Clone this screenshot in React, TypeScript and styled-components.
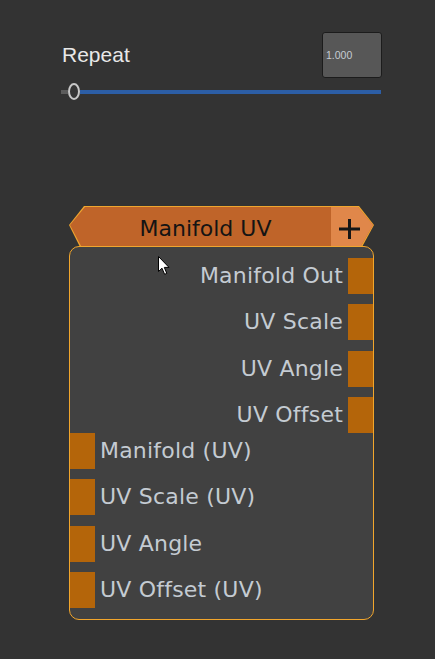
import React from "react";
import styled, { createGlobalStyle } from "styled-components";

const GlobalStyle = createGlobalStyle`
  html, body {
    margin: 0;
    padding: 0;
    background: #333333;
  }
  body {
    font-family: "DejaVu Sans", "Liberation Sans", sans-serif;
  }
`;

const Page = styled.div`
  position: relative;
  width: 435px;
  min-height: 659px;
  box-sizing: border-box;
  padding-top: 32px;
  background: #333333;
  overflow: hidden;
`;

const ParamBlock = styled.div`
  margin-left: 61px;
  width: 321px;
`;

const ParamHeader = styled.div`
  display: flex;
  align-items: center;
  justify-content: space-between;
  height: 46px;
`;

const ParamLabel = styled.span`
  font-family: "Liberation Sans", Arial, sans-serif;
  font-size: 21px;
  line-height: 24px;
  color: #e8e8e8;
  padding-left: 1px;
`;

const ValueBox = styled.div`
  width: 60px;
  height: 46px;
  box-sizing: border-box;
  background: #575757;
  border: 1px solid #1c1c1c;
  border-radius: 3px;
  display: flex;
  align-items: center;
  padding-left: 3px;
  font-family: "Liberation Sans", Arial, sans-serif;
  font-size: 10.5px;
  color: #c6ccd3;
`;

const SliderRow = styled.div`
  display: flex;
  align-items: center;
  height: 17px;
  margin-top: 5px;
  margin-right: 1px;
`;

const TrackLeft = styled.div`
  width: 7px;
  height: 4px;
  background: #5c5c5c;
`;

const Handle = styled.div`
  width: 12px;
  height: 17px;
  box-sizing: border-box;
  border: 2px solid #c8c8c8;
  border-radius: 50%;
  background: #363636;
`;

const TrackFill = styled.div`
  flex: 1;
  height: 4px;
  background: #2c5ea6;
`;

const Node = styled.div`
  position: relative;
  margin-top: 106px;
  margin-left: 69px;
  width: 305px;
  display: flex;
  flex-direction: column;
`;

const NodeHeader = styled.div`
  position: relative;
  z-index: 2;
  height: 41px;
  box-sizing: border-box;
  padding: 1px;
  display: flex;
  background: #f0a62f;
  clip-path: polygon(15px 0, calc(100% - 15px) 0, 100% 19px, calc(100% - 12px) 100%, 11px 100%, 0 19px);
`;

const HeaderFill = styled.div`
  flex: 1;
  display: flex;
  background: #bf6429;
  clip-path: polygon(15px 0, calc(100% - 15px) 0, 100% 18px, calc(100% - 12px) 100%, 11px 100%, 0 18px);
`;

const Title = styled.div`
  flex: 1;
  display: flex;
  align-items: center;
  justify-content: center;
  padding-left: 10px;
  padding-top: 4px;
  font-size: 22px;
  color: #141414;
`;

const PlusButton = styled.div`
  width: 42px;
  box-sizing: border-box;
  padding-right: 5px;
  padding-top: 4px;
  display: flex;
  align-items: center;
  justify-content: center;
  background: #e0874a;
`;

const Body = styled.div`
  margin-top: -1px;
  height: 374px;
  box-sizing: border-box;
  border: 1px solid #f2a62c;
  border-radius: 10px;
  background: #414141;
  padding: 11px 0;
  display: flex;
  flex-direction: column;
`;

const Group = styled.div`
  display: flex;
  flex-direction: column;
  gap: 10.33px;
`;

const Row = styled.div<{ $out?: boolean }>`
  display: flex;
  align-items: center;
  justify-content: ${(p) => (p.$out ? "flex-end" : "flex-start")};
  gap: 5px;
  height: 36px;
`;

const Label = styled.span`
  font-size: 22px;
  line-height: 26px;
  letter-spacing: 0.2px;
  color: #c4cbd2;
  white-space: nowrap;
`;

const Port = styled.div`
  width: 25px;
  height: 36px;
  background: #b4650a;
  flex-shrink: 0;
`;

const Cursor = styled.svg`
  position: absolute;
  left: 158px;
  top: 256px;
`;

const outputs = ["Manifold Out", "UV Scale", "UV Angle", "UV Offset"];
const inputs = ["Manifold (UV)", "UV Scale (UV)", "UV Angle", "UV Offset (UV)"];

export default function App() {
  return (
    <Page>
      <GlobalStyle />
      <ParamBlock>
        <ParamHeader>
          <ParamLabel>Repeat</ParamLabel>
          <ValueBox>1.000</ValueBox>
        </ParamHeader>
        <SliderRow>
          <TrackLeft />
          <Handle />
          <TrackFill />
        </SliderRow>
      </ParamBlock>

      <Node>
        <NodeHeader>
          <HeaderFill>
            <Title>Manifold UV</Title>
            <PlusButton>
              <svg width="21" height="20" viewBox="0 0 21 20">
                <rect x="0" y="8.5" width="21" height="3" fill="#161616" />
                <rect x="9" y="0" width="3" height="20" fill="#161616" />
              </svg>
            </PlusButton>
          </HeaderFill>
        </NodeHeader>
        <Body>
          <Group>
            {outputs.map((o) => (
              <Row $out key={o}>
                <Label>{o}</Label>
                <Port />
              </Row>
            ))}
          </Group>
          <Group>
            {inputs.map((i) => (
              <Row key={i}>
                <Port />
                <Label>{i}</Label>
              </Row>
            ))}
          </Group>
        </Body>
      </Node>

      <Cursor width="13" height="20" viewBox="0 0 13 20">
        <path
          d="M0.5 0.5 L0.5 15.5 L4 12.2 L6.6 18.3 L8.8 17.4 L6.3 11.4 L11 11.4 Z"
          fill="#ffffff"
          stroke="#000000"
          strokeWidth="1"
          strokeLinejoin="miter"
        />
      </Cursor>
    </Page>
  );
}
